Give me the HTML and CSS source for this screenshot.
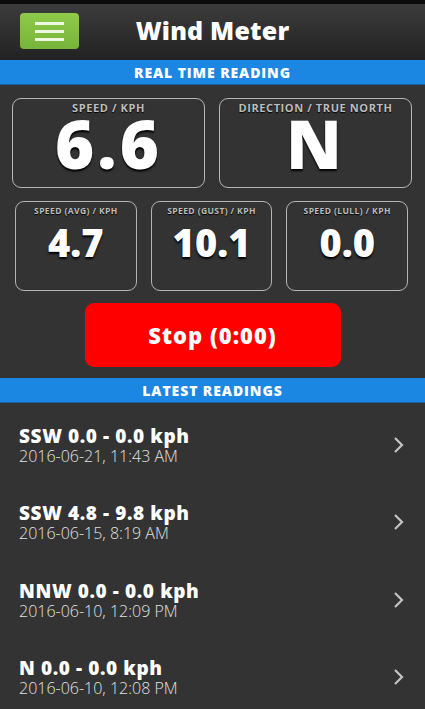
FILE: index.html
```html
<!DOCTYPE html>
<html lang="en">
<head>
    <meta charset="UTF-8">
    <meta name="viewport" content="width=device-width, initial-scale=1.0">
    <title>Wind Meter</title>
    <link rel="stylesheet" href="styles.css">
</head>
<body>
    <header class="topbar">
        <button class="menu-btn" aria-label="Menu">
            <span></span><span></span><span></span>
        </button>
        <h1>Wind Meter</h1>
    </header>

    <div class="section-bar">REAL TIME READING</div>

    <div class="row row-big">
        <div class="box">
            <div class="label">SPEED / KPH</div>
            <div class="value">6.6</div>
        </div>
        <div class="box">
            <div class="label">DIRECTION / TRUE NORTH</div>
            <div class="value">N</div>
        </div>
    </div>

    <div class="row row-small">
        <div class="box">
            <div class="label">SPEED (AVG) / KPH</div>
            <div class="value">4.7</div>
        </div>
        <div class="box">
            <div class="label">SPEED (GUST) / KPH</div>
            <div class="value">10.1</div>
        </div>
        <div class="box">
            <div class="label">SPEED (LULL) / KPH</div>
            <div class="value">0.0</div>
        </div>
    </div>

    <div class="stop-wrap">
        <button class="stop-btn">Stop (0:00)</button>
    </div>

    <div class="section-bar">LATEST READINGS</div>

    <ul class="readings">
        <li>
            <div>
                <div class="r-title">SSW 0.0 - 0.0 kph</div>
                <div class="r-date">2016-06-21, 11:43 AM</div>
            </div>
            <svg class="chev" width="12" height="18" viewBox="0 0 12 18"><path d="M2 2 L9 9 L2 16" fill="none" stroke="#c4c4c4" stroke-width="2.2"/></svg>
        </li>
        <li>
            <div>
                <div class="r-title">SSW 4.8 - 9.8 kph</div>
                <div class="r-date">2016-06-15, 8:19 AM</div>
            </div>
            <svg class="chev" width="12" height="18" viewBox="0 0 12 18"><path d="M2 2 L9 9 L2 16" fill="none" stroke="#c4c4c4" stroke-width="2.2"/></svg>
        </li>
        <li>
            <div>
                <div class="r-title">NNW 0.0 - 0.0 kph</div>
                <div class="r-date">2016-06-10, 12:09 PM</div>
            </div>
            <svg class="chev" width="12" height="18" viewBox="0 0 12 18"><path d="M2 2 L9 9 L2 16" fill="none" stroke="#c4c4c4" stroke-width="2.2"/></svg>
        </li>
        <li>
            <div>
                <div class="r-title">N 0.0 - 0.0 kph</div>
                <div class="r-date">2016-06-10, 12:08 PM</div>
            </div>
            <svg class="chev" width="12" height="18" viewBox="0 0 12 18"><path d="M2 2 L9 9 L2 16" fill="none" stroke="#c4c4c4" stroke-width="2.2"/></svg>
        </li>
    </ul>
</body>
</html>
```

FILE: styles.css
```css
body {
    margin: 0;
    background-color: #333333;
    color: #fff;
    font-family: 'Open Sans', 'DejaVu Sans', sans-serif;
    overflow: hidden;
}
.topbar {
    height: 56px;
    border-top: 4px solid #0c0c0c;
    background: linear-gradient(#3c3c3c, #222);
    display: flex;
    align-items: center;
    position: relative;
}
.topbar h1 {
    flex: 1;
    margin: 0;
    text-align: center;
    font-size: 25px;
    font-weight: 800;
    letter-spacing: 0.2px;
    padding-bottom: 4px;
}
.menu-btn {
    position: absolute;
    left: 20px;
    top: 9px;
    width: 59px;
    height: 36px;
    border: none;
    border-radius: 4px;
    background: linear-gradient(#8fcb4a, #76b33a);
    display: flex;
    flex-direction: column;
    justify-content: center;
    align-items: center;
    gap: 5px;
    padding: 0;
}
.menu-btn span {
    display: block;
    width: 29px;
    height: 3px;
    background: #eef7e2;
}
.section-bar {
    height: 25px;
    line-height: 25px;
    background-color: #1c86e3;
    border-bottom: 1px solid #17609f;
    box-sizing: border-box;
    text-align: center;
    font-size: 14px;
    font-weight: 800;
    letter-spacing: 0.9px;
}
.row {
    display: flex;
}
.row-big {
    padding: 13px 13px 0 12px;
    gap: 14px;
}
.row-small {
    padding: 13px 17px 0 15px;
    gap: 14px;
}
.box {
    flex: 1;
    height: 90px;
    box-sizing: border-box;
    border: 1px solid #b5b5b5;
    border-radius: 9px;
    text-align: center;
}
.label {
    color: #bdbdbd;
    font-weight: 700;
    text-shadow: 0 1px 1px #000;
}
.value {
    font-weight: 800;
    text-shadow: 0 2px 2px #000;
}
.row-big .label {
    font-size: 11px;
    line-height: 14px;
    margin-top: 2px;
    letter-spacing: 0.6px;
}
.row-big .value {
    font-size: 67px;
    line-height: 56px;
    letter-spacing: 3px;
}
.row-small .label {
    font-size: 8.5px;
    line-height: 11px;
    margin-top: 3px;
    letter-spacing: 0.4px;
}
.row-small .value {
    font-size: 38px;
    line-height: 40px;
    margin-top: 6px;
}
.stop-wrap {
    display: flex;
    justify-content: center;
    padding: 12px 0 11px;
}
.stop-btn {
    width: 256px;
    height: 64px;
    border: none;
    border-radius: 9px;
    background: #fe0000;
    color: #fff;
    font-family: inherit;
    font-size: 22px;
    font-weight: 800;
    letter-spacing: 1px;
}
.readings {
    list-style: none;
    margin: 0;
    padding: 0;
}
.readings li {
    height: 77.5px;
    display: flex;
    align-items: center;
    justify-content: space-between;
    padding: 6px 20px 0 19px;
    box-sizing: border-box;
}
.r-title {
    font-size: 19px;
    font-weight: 800;
    line-height: 22px;
    letter-spacing: 0.6px;
}
.r-date {
    font-size: 16px;
    font-weight: 300;
    color: #e2e2e2;
    line-height: 18px;
}
.chev {
    display: block;
}
```
